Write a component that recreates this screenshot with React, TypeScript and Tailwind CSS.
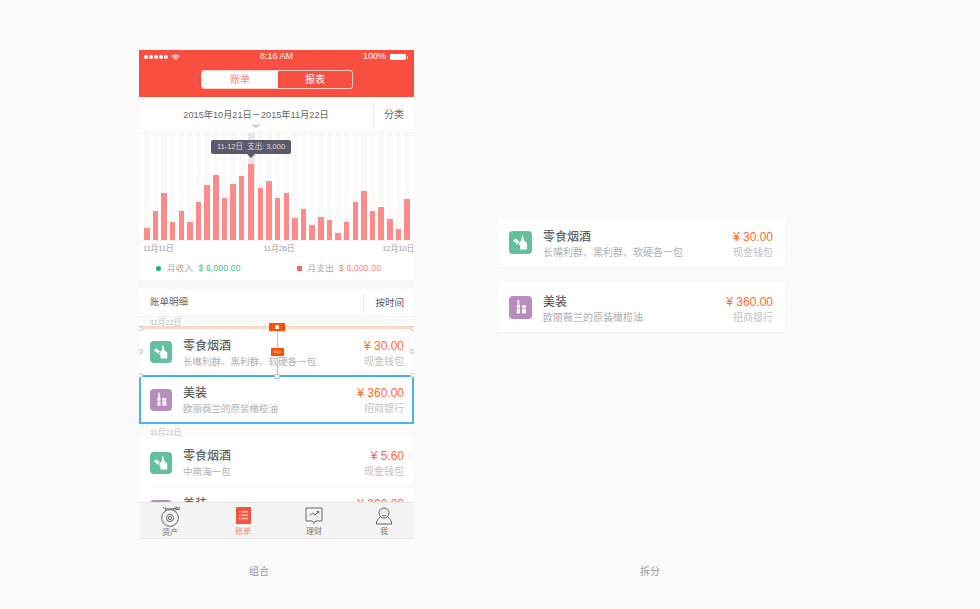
import React from "react";

const tops = [294,243,189,277,244,275,216,164,134,203,162,138,102,175,152,205,190,263,238,286,261,271,310,275,216,184,244,232,268,297,207];

function LighterIcon({ size }: { size: string }) {
  return (
    <div className={`${size} shrink-0 rounded-[4px] bg-[#63c09c] flex items-center justify-center`}>
      <svg viewBox="0 0 23 23" className="w-full h-full" fill="#fff">
        <path d="M12 9.6 L12.6 9.6 L12.6 7 L13.4 3.6 L14.6 7 L14.6 9.6 L15.4 9.6 L18 12 L18 18.4 L11 18.4 L11 14 L9.4 14 L11 11 Z" />
        <path d="M4 9.6 L6.4 7.6 L10.4 10.6 L8.4 13.4 Z" />
      </svg>
    </div>
  );
}

function LipstickIcon({ size }: { size: string }) {
  return (
    <div className={`${size} shrink-0 rounded-[4px] bg-[#b98cc0] flex items-center justify-center`}>
      <svg viewBox="0 0 23 23" className="w-full h-full" fill="#fff">
        <path d="M8.6 4 L10.2 4 L10.2 9 L11 9 L11 12.4 L7.8 12.4 L7.8 9 L8.6 9 Z" />
        <rect x="7.8" y="13" width="3.2" height="4.4" />
        <rect x="13" y="9.4" width="4" height="2.8" />
        <rect x="13" y="12.8" width="4" height="4.6" />
      </svg>
    </div>
  );
}

function Row({
  icon, title, sub, amount, account, className = "", subClass = "text-[9.5px]", textClass = "",
}: {
  icon: React.ReactNode; title: string; sub: string; amount: string; account: string; className?: string; subClass?: string; textClass?: string;
}) {
  return (
    <div className={`flex items-center ${className}`}>
      {icon}
      <div className={`flex-1 flex flex-col min-w-0 ml-[11px] ${textClass}`}>
        <div className="text-[12px] leading-[16px] text-[#4a4a4a]">{title}</div>
        <div className={`${subClass} leading-[15px] text-[#b0b0b0] whitespace-nowrap`}>{sub}</div>
      </div>
      <div className={`flex flex-col items-end ${textClass}`}>
        <div className="text-[12px] leading-[16px] text-[#ff6a2e]">{amount}</div>
        <div className="text-[10px] leading-[15px] text-[#c2c2c2]">{account}</div>
      </div>
    </div>
  );
}

function Handle({ cls }: { cls: string }) {
  return <div className={`absolute w-[5px] h-[5px] rounded-full bg-white border border-[#bbb] ${cls}`} />;
}

function StatusBar() {
  return (
    <div className="h-[14px] flex items-center text-white text-[9px] pl-[5px] pr-[6px]">
      <div className="flex gap-[1px] items-center">
        {[0,1,2,3,4].map((i) => <div key={i} className="w-[4px] h-[4px] rounded-full bg-white" />)}
      </div>
      <svg viewBox="0 0 10 8" className="w-[9px] h-[7px] ml-[3px]" fill="none" stroke="#fff" strokeWidth="1.2">
        <path d="M0.6 3 C3 0.6 7 0.6 9.4 3 M2 4.6 C3.8 3 6.2 3 8 4.6 M3.6 6 C4.4 5.4 5.6 5.4 6.4 6" />
      </svg>
      <div className="flex-1 text-center pl-[10px]">8:16 AM</div>
      <span>100%</span>
      <div className="ml-[4px] w-[16px] h-[6px] bg-white rounded-[1px]" />
      <div className="w-[1px] h-[3px] bg-white ml-[1px]" />
    </div>
  );
}

function Chart() {
  return (
    <div className="bg-white relative">
      <div className="h-[107px] flex justify-between pl-[5px] pr-[4px] border-b border-[#f2f2f2] box-content">
        {tops.map((t, i) => (
          <div key={i} className={`h-full flex flex-col justify-end ${i === 12 ? "w-[7px] bg-[#e8e8e8] items-center" : "w-[5.5px] bg-[#fafafa]"}`}>
            <div className="w-[5.5px] bg-[#ff8a8a]" style={{ height: (330 - t) / 3 }} />
          </div>
        ))}
      </div>
      <div className="absolute left-[72px] top-[7px] w-[80px] h-[14px] bg-[#5c5a6a] rounded-[2px] text-[#dcdce0] text-[7.5px] leading-[14px] text-center whitespace-nowrap">
        11-12日&nbsp;&nbsp;支出: 3,000
        <div className="absolute left-[36px] top-[14px] w-0 h-0 border-l-[4px] border-r-[4px] border-t-[4px] border-l-transparent border-r-transparent border-t-[#5c5a6a]" />
      </div>
      <div className="flex justify-between pl-[4px] pr-0 text-[7.5px] leading-[12px] text-[#999] mt-[2px]">
        <span>11月11日</span><span className="pl-[2px]">11月26日</span><span>12月10日</span>
      </div>
      <div className="flex items-center h-[25px] text-[8.5px] pt-[1px]">
        <div className="w-[5px] h-[5px] rounded-full bg-[#10b07a] ml-[17px]" />
        <span className="ml-[6px] text-[#aaa] tracking-[0.3px]">月收入</span>
        <span className="ml-[5px] text-[#38c088] tracking-[0.2px]">$ 6,000.00</span>
        <div className="w-[5px] h-[5px] bg-[#f76464] ml-[56px]" />
        <span className="ml-[6px] text-[#aaa] tracking-[0.3px]">月支出</span>
        <span className="ml-[5px] text-[#ff8484] tracking-[0.2px]">$ 6,000.00</span>
      </div>
    </div>
  );
}

function Annotations() {
  return (
    <>
      <div className="absolute left-0 right-0 top-[9px] h-[2.5px] bg-[#fcd8c6]" />
      <div className="absolute left-[138px] top-[11px] w-[1px] h-[47px] bg-[#fbb08c]" />
      <div className="absolute left-[130px] top-[6px] w-[16px] h-[8px] bg-[#ff4f00] flex items-center justify-center">
        <div className="w-[4px] h-[4px] bg-white" />
      </div>
      <div className="absolute left-[132px] top-[31px] w-[13px] h-[8px] bg-[#ff4f00] text-[4px] leading-[8px] text-center text-[#ffd9c4]">65pt</div>
      <Handle cls="-left-[1px] top-[9px]" />
      <Handle cls="-left-[1px] top-[32px]" />
      <Handle cls="-left-[1px] top-[56px]" />
      <Handle cls="-right-[1px] top-[9px]" />
      <Handle cls="-right-[1px] top-[32px]" />
      <Handle cls="-right-[1px] top-[56px]" />
      <div className="absolute left-[135px] top-[57px] w-[6px] h-[5px] rounded-[1px] bg-white border border-[#bbb]" />
    </>
  );
}

function Tab({ label, active, className = "", children }: { label: string; active?: boolean; className?: string; children: React.ReactNode }) {
  return (
    <div className={`w-[22px] flex flex-col items-center ${className}`}>
      <div className="w-[22px] h-[20px] flex items-center justify-center">{children}</div>
      <div className={`text-[8px] leading-[12px] mt-[1px] whitespace-nowrap ${active ? "text-[#f9857f]" : "text-[#777]"}`}>{label}</div>
    </div>
  );
}

function TabBar() {
  return (
    <div className="h-[37px] shrink-0 bg-[#f4f4f4] border-t border-b border-[#e6e6e6] flex pl-[20px] pt-[3px]">
      <Tab label="资产">
        <svg viewBox="0 0 22 21" className="w-[22px] h-[21px]" fill="none" stroke="#555" strokeWidth="0.9">
          <circle cx="11" cy="12" r="8.4" />
          <circle cx="11" cy="12" r="3.6" />
          <circle cx="11" cy="12" r="1.6" />
          <path d="M4 1.4 C8 3.6 14 3.6 18 1 M6.4 2.8 L7 5 M15 2.8 L14.4 5 M16 2.6 L21 1.6 M16 4 L21 3.2" />
        </svg>
      </Tab>
      <Tab label="账单" active className="ml-[51px]">
        <svg viewBox="0 0 15 17" className="w-[15px] h-[17px]">
          <rect width="15" height="17" fill="#f8533f" />
          <path d="M3 4 H4.4 V5.4 H3 Z M3 7.4 H4.4 V8.8 H3 Z M3 10.8 H4.4 V12.2 H3 Z M5.6 4 H12 V5.4 H5.6 Z M5.6 7.4 H12 V8.8 H5.6 Z M5.6 10.8 H12 V12.2 H5.6 Z" fill="#fcc" />
        </svg>
      </Tab>
      <Tab label="理财" className="ml-[49px]">
        <svg viewBox="0 0 18 18" className="w-[18px] h-[18px]" fill="none" stroke="#555" strokeWidth="0.9">
          <path d="M1 1 H17 V14 H11 L9 15.5 L7 14 H1 Z" />
          <path d="M4.5 9 L7.5 6 L10 8 L13.5 4.5 M11.6 4.4 H13.8 V6.4" />
          <path d="M9 15.5 V17" />
        </svg>
      </Tab>
      <Tab label="我" className="ml-[48px]">
        <svg viewBox="0 0 18 18" className="w-[18px] h-[18px]" fill="none" stroke="#555" strokeWidth="0.9">
          <circle cx="9" cy="6" r="5" />
          <path d="M6.8 5 H7.4 M10.6 5 H11.2 M7 8 C8 9 10 9 11 8" />
          <path d="M5.4 10.2 C2.8 11.6 1.4 14 1.4 17 H16.6 C16.6 14 15.2 11.6 12.6 10.2" />
        </svg>
      </Tab>
    </div>
  );
}

function Phone() {
  return (
    <div className="w-[275px] h-[489px] flex flex-col overflow-hidden bg-[#f7f7f7]">
      <div className="h-[47px] shrink-0 bg-[#f84f41]">
        <StatusBar />
        <div className="ml-[62px] mr-[61px] mt-[6px] h-[19px] flex rounded-[3px] border border-[#fdd3cf] overflow-hidden text-[10px] leading-[17px] text-center">
          <div className="w-[76px] bg-white text-[#f9857f]">账单</div>
          <div className="flex-1 text-white">报表</div>
        </div>
      </div>
      <div className="h-[36px] shrink-0 bg-white flex border-b border-[#f2f2f2]">
        <div className="w-[234px] flex flex-col items-center pt-[11px] text-[9.2px] leading-[14px] text-[#666] whitespace-nowrap">
          <div>2015年10月21日－2015年11月22日</div>
          <svg viewBox="0 0 10 5" className="w-[8px] h-[4px] mt-[2px]" fill="none" stroke="#777" strokeWidth="1"><path d="M1 0.5 L5 4 L9 0.5" /></svg>
        </div>
        <div className="flex-1 my-[4px] border-l border-[#eee] flex items-center justify-center pb-[1px] text-[10px] text-[#666]">分类</div>
      </div>
      <Chart />
      <div className="h-[9px] shrink-0" />
      <div className="flex-1 min-h-0 overflow-hidden bg-white">
        <div className="h-[28px] flex items-center border-b border-[#f2f2f2] text-[9.5px] text-[#666] pl-[11px]">
          <span className="flex-1">账单明细</span>
          <div className="w-[51px] h-[20px] border-l border-[#eee] text-right pr-[10px] leading-[20px] text-[#555]">按时间</div>
        </div>
        <div className="relative">
          <div className="h-[12px] bg-[#fbfbfb] pl-[11px] text-[7.5px] leading-[12px] text-[#bbb]">11月22日</div>
          <Row className="h-[46px] pl-[11px] pr-[10px] bg-white" textClass="pt-[2px]" icon={<LighterIcon size="w-[22px] h-[22px]" />} title="零食烟酒" sub="长嘴利群、黑利群、软硬各一包" amount="¥ 30.00" account="现金钱包" />
          <Row className="h-[49px] pl-[9px] pr-[8px] border-2 border-[#44b5f0] bg-white" textClass="pt-[2px]" icon={<LipstickIcon size="w-[22px] h-[22px]" />} title="美装" sub="欧丽薇兰的原装橄榄油" amount="¥ 360.00" account="招商银行" />
          <Annotations />
          <div className="h-[14px] bg-[#fbfbfb] pl-[11px] text-[7.5px] leading-[18px] text-[#bbb]">11月21日</div>
          <Row className="h-[48px] pt-[2px] pl-[11px] pr-[10px] bg-white" textClass="pt-[1px]" icon={<LighterIcon size="w-[22px] h-[22px]" />} title="零食烟酒" sub="中南海一包" amount="¥ 5.60" account="现金钱包" />
          <div className="h-[1px] bg-white pl-[13px]"><div className="h-full bg-[#f2f2f2]" /></div>
          <Row className="h-[48px] pl-[11px] pr-[10px] bg-white" icon={<LipstickIcon size="w-[22px] h-[22px]" />} title="美装" sub="欧丽薇兰的原装橄榄油" amount="¥ 360.00" account="招商银行" />
        </div>
      </div>
      <TabBar />
    </div>
  );
}

export default function App() {
  return (
    <div
      className="w-[980px] h-[609px] bg-[#fafafa] flex overflow-hidden"
      style={{ fontFamily: '"Liberation Sans","Noto Sans CJK SC",sans-serif' }}
    >
      <div className="w-[498px] shrink-0 pl-[139px] pt-[50px]">
        <Phone />
        <div className="w-[240px] mt-[26px] text-center text-[10px] leading-[14px] text-[#999]">组合</div>
      </div>
      <div className="w-[287px] flex flex-col pt-[218px]">
        <Row className="h-[49px] pl-[11px] pr-[12px] bg-white shadow-[0_1px_1px_#f4f4f4]" subClass="text-[10px]" textClass="pt-[4px]" icon={<LighterIcon size="w-[23px] h-[23px]" />} title="零食烟酒" sub="长嘴利群、黑利群、软硬各一包" amount="¥ 30.00" account="现金钱包" />
        <Row className="h-[49px] mt-[16px] pl-[11px] pr-[12px] bg-white shadow-[0_1px_1px_#f4f4f4]" subClass="text-[10px]" textClass="pt-[4px]" icon={<LipstickIcon size="w-[23px] h-[23px]" />} title="美装" sub="欧丽薇兰的原装橄榄油" amount="¥ 360.00" account="招商银行" />
        <div className="mt-[233px] text-center text-[10px] leading-[14px] text-[#999] pl-[17px]">拆分</div>
      </div>
    </div>
  );
}
